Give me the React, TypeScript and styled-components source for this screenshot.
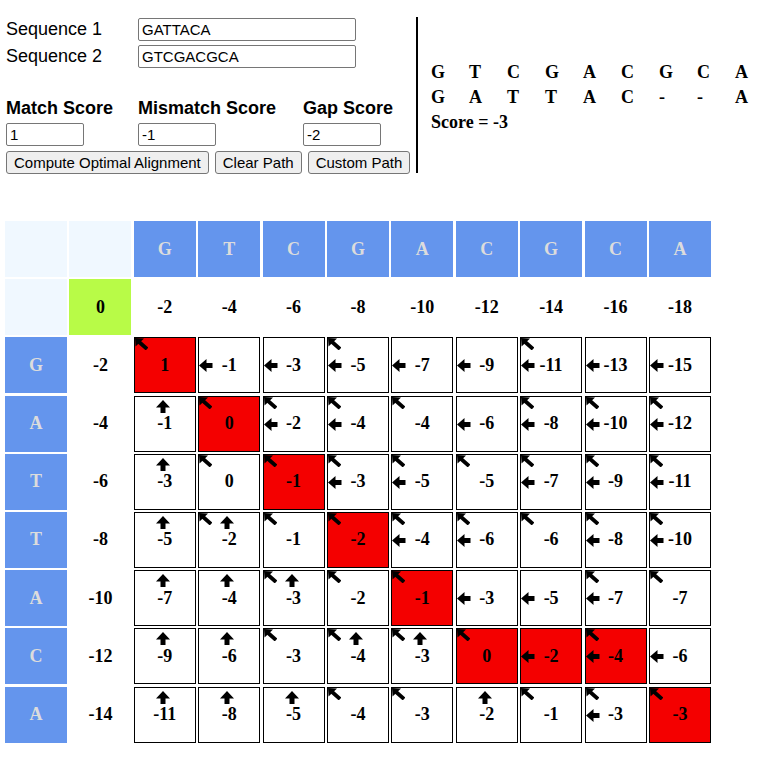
import React from 'react';
import styled, { createGlobalStyle } from 'styled-components';

const GlobalStyle = createGlobalStyle`
  body {
    margin: 0;
    background: #fff;
    color: #000;
    font-family: 'Liberation Sans', Arial, sans-serif;
  }
`;

const Page = styled.div`
  padding: 17px 0 20px 5px;
`;

const Top = styled.div`
  display: flex;
  align-items: flex-start;
`;

const Form = styled.div`
  flex-shrink: 0;
  width: 406px;
  padding: 1px 0 0 1px;
`;

const SequenceGrid = styled.div`
  display: grid;
  grid-template-columns: 132px 218px;
  row-gap: 4px;
  align-items: center;
`;

const Label = styled.label`
  font-size: 18px;
`;

const ScoreGrid = styled.div`
  display: grid;
  grid-template-columns: 132px 165px auto;
  row-gap: 4px;
  margin-top: 29px;
`;

const ScoreLabel = styled.label`
  font-size: 18px;
  font-weight: bold;
  line-height: 22px;
`;

const TextInput = styled.input<{ $width: number }>`
  box-sizing: border-box;
  width: ${({ $width }) => $width}px;
  height: 23px;
  padding: 1px 3px;
  font: 15px 'Liberation Sans', Arial, sans-serif;
  color: #000;
  border: 1px solid #767676;
  border-radius: 2px;
  background: #fff;
`;

const Buttons = styled.div`
  display: flex;
  gap: 6px;
  margin-top: 5px;
`;

const Button = styled.button`
  height: 23px;
  padding: 0 7px;
  font: 15px 'Liberation Sans', Arial, sans-serif;
  color: #000;
  background: #efefef;
  border: 1px solid #767676;
  border-radius: 3px;
  white-space: nowrap;
`;

const Divider = styled.div`
  flex-shrink: 0;
  width: 2px;
  height: 156px;
  margin-left: 4px;
  background: #000;
`;

const AlignPanel = styled.div`
  min-width: 0;
  padding: 43px 0 0 13px;
  font: bold 18px 'Liberation Serif', 'Times New Roman', serif;
  line-height: 25px;
  white-space: nowrap;
`;

const AlignRow = styled.div`
  display: grid;
  grid-template-columns: repeat(9, 38px);
`;

const Matrix = styled.div`
  display: grid;
  grid-template-columns: repeat(11, 62px);
  grid-auto-rows: 56px;
  column-gap: 2.4px;
  row-gap: 2.2px;
  margin-top: 47px;
  font: bold 18px 'Liberation Serif', 'Times New Roman', serif;
`;

type Kind = 'corner' | 'head' | 'origin' | 'edge' | 'score';

const backgrounds: Record<Kind, string> = {
  corner: '#f0f8ff',
  head: '#6495ed',
  origin: '#b8fb47',
  edge: '#fff',
  score: '#fff',
};

const Cell = styled.div<{ $kind: Kind; $path?: boolean }>`
  position: relative;
  box-sizing: border-box;
  display: flex;
  align-items: center;
  justify-content: center;
  background: ${({ $kind, $path }) => ($path ? '#f40000' : backgrounds[$kind])};
  color: ${({ $kind }) => ($kind === 'head' ? '#dcdcdc' : '#000')};
  border: ${({ $kind }) => ($kind === 'score' ? '1px solid #000' : 'none')};
`;

const ArrowBox = styled.svg<{ $left: number; $top: number }>`
  position: absolute;
  left: ${({ $left }) => $left}px;
  top: ${({ $top }) => $top}px;
`;

const LeftArrow = () => (
  <ArrowBox $left={0} $top={21} width="14" height="13" viewBox="0 0 14 13">
    <path d="M0 6.5 L7.5 0 L7.5 4 L13.5 4 L13.5 9 L7.5 9 L7.5 13 Z" fill="#000" />
  </ArrowBox>
);

const UpArrow = () => (
  <ArrowBox $left={21} $top={3} width="14" height="13" viewBox="0 0 14 13">
    <path d="M7 0 L14 7.5 L9.5 7.5 L9.5 13 L4.5 13 L4.5 7.5 L0 7.5 Z" fill="#000" />
  </ArrowBox>
);

const DiagArrow = () => (
  <ArrowBox $left={0} $top={0} width="13" height="12" viewBox="0 0 13 12">
    <path d="M0 0 L9 0.5 L0.5 8.5 Z" fill="#000" />
    <path d="M3 3 L12 11" stroke="#000" strokeWidth="3.8" />
  </ArrowBox>
);

// [score, arrows (d = diagonal, u = up, l = left), on optimal path]
type Entry = [number, string, boolean?];

const top = ['G', 'T', 'C', 'G', 'A', 'C', 'G', 'C', 'A'];

const rows: { letter: string; gap: number; cells: Entry[] }[] = [
  {
    letter: 'G',
    gap: -2,
    cells: [[1, 'd', true], [-1, 'l'], [-3, 'l'], [-5, 'dl'], [-7, 'l'], [-9, 'l'], [-11, 'dl'], [-13, 'l'], [-15, 'l']],
  },
  {
    letter: 'A',
    gap: -4,
    cells: [[-1, 'u'], [0, 'd', true], [-2, 'dl'], [-4, 'dl'], [-4, 'd'], [-6, 'l'], [-8, 'dl'], [-10, 'dl'], [-12, 'dl']],
  },
  {
    letter: 'T',
    gap: -6,
    cells: [[-3, 'u'], [0, 'd'], [-1, 'd', true], [-3, 'dl'], [-5, 'dl'], [-5, 'd'], [-7, 'dl'], [-9, 'dl'], [-11, 'dl']],
  },
  {
    letter: 'T',
    gap: -8,
    cells: [[-5, 'u'], [-2, 'du'], [-1, 'd'], [-2, 'd', true], [-4, 'dl'], [-6, 'dl'], [-6, 'd'], [-8, 'dl'], [-10, 'dl']],
  },
  {
    letter: 'A',
    gap: -10,
    cells: [[-7, 'u'], [-4, 'u'], [-3, 'du'], [-2, 'd'], [-1, 'd', true], [-3, 'l'], [-5, 'l'], [-7, 'dl'], [-7, 'd']],
  },
  {
    letter: 'C',
    gap: -12,
    cells: [[-9, 'u'], [-6, 'u'], [-3, 'd'], [-4, 'du'], [-3, 'du'], [0, 'd', true], [-2, 'l', true], [-4, 'dl', true], [-6, 'l']],
  },
  {
    letter: 'A',
    gap: -14,
    cells: [[-11, 'u'], [-8, 'u'], [-5, 'u'], [-4, 'd'], [-3, 'd'], [-2, 'u'], [-1, 'd'], [-3, 'dl'], [-3, 'd', true]],
  },
];

const aligned = [
  ['G', 'T', 'C', 'G', 'A', 'C', 'G', 'C', 'A'],
  ['G', 'A', 'T', 'T', 'A', 'C', '-', '-', 'A'],
];

const ScoreCell = ({ entry }: { entry: Entry }) => {
  const [value, arrows, path] = entry;
  return (
    <Cell $kind="score" $path={path}>
      {arrows.includes('d') && <DiagArrow />}
      {arrows.includes('u') && <UpArrow />}
      {arrows.includes('l') && <LeftArrow />}
      {value}
    </Cell>
  );
};

export default function App() {
  return (
    <Page>
      <GlobalStyle />
      <Top>
        <Form>
          <SequenceGrid>
            <Label>Sequence 1</Label>
            <TextInput $width={218} defaultValue="GATTACA" />
            <Label>Sequence 2</Label>
            <TextInput $width={218} defaultValue="GTCGACGCA" />
          </SequenceGrid>
          <ScoreGrid>
            <ScoreLabel>Match Score</ScoreLabel>
            <ScoreLabel>Mismatch Score</ScoreLabel>
            <ScoreLabel>Gap Score</ScoreLabel>
            <TextInput $width={78} defaultValue="1" />
            <TextInput $width={78} defaultValue="-1" />
            <TextInput $width={78} defaultValue="-2" />
          </ScoreGrid>
          <Buttons>
            <Button>Compute Optimal Alignment</Button>
            <Button>Clear Path</Button>
            <Button>Custom Path</Button>
          </Buttons>
        </Form>
        <Divider />
        <AlignPanel>
          {aligned.map((line, i) => (
            <AlignRow key={i}>
              {line.map((ch, j) => (
                <span key={j}>{ch}</span>
              ))}
            </AlignRow>
          ))}
          <div>Score = -3</div>
        </AlignPanel>
      </Top>

      <Matrix>
        <Cell $kind="corner" />
        <Cell $kind="corner" />
        {top.map((ch, i) => (
          <Cell key={`h${i}`} $kind="head">
            {ch}
          </Cell>
        ))}

        <Cell $kind="corner" />
        <Cell $kind="origin">0</Cell>
        {top.map((_, i) => (
          <Cell key={`g${i}`} $kind="edge">
            {-2 * (i + 1)}
          </Cell>
        ))}

        {rows.map((row, r) => (
          <React.Fragment key={r}>
            <Cell $kind="head">{row.letter}</Cell>
            <Cell $kind="edge">{row.gap}</Cell>
            {row.cells.map((entry, c) => (
              <ScoreCell key={c} entry={entry} />
            ))}
          </React.Fragment>
        ))}
      </Matrix>
    </Page>
  );
}
